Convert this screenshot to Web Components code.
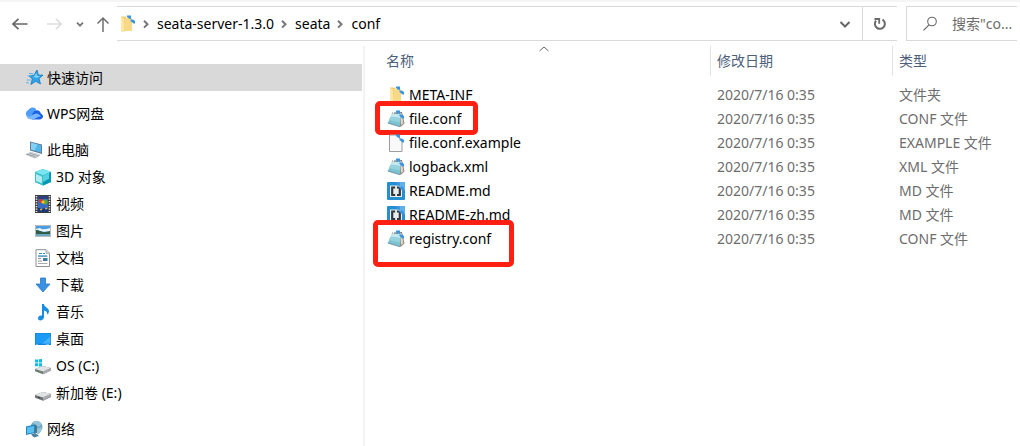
<!DOCTYPE html>
<html lang="zh-CN">
<head>
<meta charset="utf-8">
<title>conf</title>
<style>
  html, body { margin: 0; min-height: 100%; background: #fff; }
  body { font-family: "Noto Sans", "Noto Sans CJK SC", sans-serif; font-size: 14px; line-height: 24px; color: #000; }
</style>
</head>
<body>
<explorer-window></explorer-window>
<script>
const BADGE = '<path d="M9 .5h4v3.500h-1.500L9 2zM12.500 4.500H15l2 1.500v2.500h-1.500l-3-2.500z" fill="#3a94e0"/><path d="M12 3.500 13.500 5" stroke="#8fc4ee"/>';
const ICONS = {
  back: '<path d="M16.500 9H2M7.500 3.800 2 9l5.500 5.200" fill="none" stroke="#666" stroke-width="1.700"/>',
  forward: '<path d="M2 9h14M10.800 3.800 16.300 9l-5.500 5.200" fill="none" stroke="#ddd" stroke-width="1.700"/>',
  history: '<path d="m6 7.700 3 3 3-3" fill="none" stroke="#777" stroke-width="1.900"/>',
  up: '<path d="M9 17V3M3.500 8.500 9 3l5.500 5.500" fill="none" stroke="#707070" stroke-width="1.500"/>',
  chevron: '<path d="m7 5.800 3.500 3.400L7 12.600" fill="none" stroke="#777" stroke-width="2"/>',
  down: '<path d="m4.500 7 4.500 4.500L13.500 7" fill="none" stroke="#666" stroke-width="2"/>',
  refresh: '<path d="M11.500 4.600A5 5 0 1 1 5 5.700" fill="none" stroke="#6a6a6a" stroke-width="2"/><path d="M3.500 4h4.700v4.700" fill="none" stroke="#6a6a6a" stroke-width="1.800"/>',
  search: '<circle cx="11" cy="6.500" r="4.300" fill="none" stroke="#666" stroke-width="1.100"/><path d="M8 9.800 2.500 15.300" stroke="#666" stroke-width="1.200"/>',
  sort: '<path d="m4.500 11 4.500-4 4.500 4" fill="none" stroke="#666" stroke-width="1"/>',
  star: '<path d="m12 1 1.300 5 4.700.2-4 3.300 1.500 5.500-4.700-2.700-5 3.200 1.600-5.600L4 7l5-.8z" fill="#2fa4ea" stroke="#1476bd" stroke-width=".8"/><path d="m11.500 4 .8 3 3.200.3-3.500 1.700-3.500-1z" fill="#7ad2fb"/><path d="M4 4.500h4M2.500 7h4M1.800 11h4M1 13.800h3" stroke="#62b3e6" stroke-width="1"/>',
  cloud: '<path d="M2 11.500A4.200 4.200 0 0 1 3.500 4.800 4.800 4.800 0 0 1 11 4l-1 9H5a4 4 0 0 1-3-1.500z" fill="#4f9efb"/><path d="M7 14.500C7 11 7 8 9 6.500c3-2.500 6.500-.5 6.800 2 3.500 1.500 2.700 6-1.300 6z" fill="#1b62e8"/><path d="M1.500 11c3.500 2 6-2 9.500-2.500 2.500 0 4 1.500 5 3.500-2.500-2-5 2.500-9 2.500-3 0-5-1-5.500-3.500z" fill="#79b8ff"/>',
  pc: '<path d="m5 .5 12 3v9.500L5 9.500z" fill="#5f7f99"/><path d="m6 1.700 10 2.600v7.200L6 8.500z" fill="#4fb4ea"/><path d="m6 1.700 6.500 1.700-3 6.200L6 8.500z" fill="#86d0f5"/><path d="m.8 12.800 5.200-2 9 2.800-5 3.200z" fill="#d3d7db"/><path d="m2 13 8.500 2.700M4.500 12l8.500 2.700" stroke="#8a929b" stroke-width=".8"/><path d="M.8 13.200 10 17l5-3" fill="none" stroke="#9aa1a8" stroke-width=".8"/>',
  cube: '<path d="m1 4 8-3 8 3v10l-8 3.500L1 14z" fill="#23b0ca"/><path d="m1 4 8-3 8 3-8 3.500z" fill="#78e5ef"/><path d="m1 4 8 3.500v10L1 14z" fill="#40c0cc"/><path d="m2 6 6 2.700v6.500L2 13z" fill="#b0edf1"/><path d="M9 7.500 17 4v10l-8 3.500z" fill="#0798b6"/><path d="m9 7.500 6-2.700v6L9 14z" fill="#55d1e2"/>',
  video: '<path d="M1 0h16v18H1z" fill="#3c3c3c"/><path d="M4 1h10v16H4z" fill="#376bc4"/><path d="M2.500 1v16M15.500 1v16" stroke="#eee" stroke-width="1.600" stroke-dasharray="1.300 1.200"/><path d="M4 1h10v3H4z" fill="#2c407c"/><circle cx="7" cy="6" r="2" fill="#e33525"/><circle cx="11" cy="7" r="2.500" fill="#66a928"/><circle cx="9" cy="7" r="1.600" fill="#ffc12f"/><path d="M4 13h2l2 1.500 3-2 3 2V17H4z" fill="#173b77"/><path d="M6 14.500h2m3-1h2" stroke="#f1a431" stroke-width="1.600"/>',
  photo: '<path d="M1 3h16v12H1z" fill="#a9adb0"/><path d="M1.800 3.800h14.400v10.400H1.800z" fill="#fff"/><path d="M2 4h14v10H2z" fill="#b8dff9"/><path d="M2 4h14v3H2z" fill="#4c9de3"/><path d="m2 7 4-1 3 2 7-2v3H2z" fill="#edf5f5"/><path d="M2 8c4 0 5 2 9 2l5-1v3H2z" fill="#315e4a"/><path d="M2 12h14v2H2z" fill="#6aaac0"/>',
  document: '<path d="M2 .7h10l3.500 3.500V17.500H2z" fill="#fff" stroke="#8d9297"/><path d="M12 .7v3.500h3.500" fill="#ddd" stroke="#999" stroke-width=".8"/><path d="M4 7.200h9.500M4 9.500h3M4 12h4" stroke="#8e9398"/><path d="M5 4.500h3m1 0h2M4 7h9" stroke="#2c91cf" stroke-width="1.200"/><path d="M9 9h4.500v3H9z" fill="#3e7d9f"/><path d="M4 14.500h9.500" stroke="#aaa"/>',
  download: '<path d="M6.500 2h5v6H16l-7 8-7-8h4.500z" fill="#3a91e1" stroke="#2678c4" stroke-width=".8"/>',
  music: '<path d="M8 1h2c0 3 5 4 5 7 0 1.500-.8 3-1.800 3.800C13.500 9 12 8 10 7.500V14c0 4-6 4.500-6 1.500 0-2.500 2-3.500 4-3z" fill="#168fe2"/>',
  desktop: '<path d="M1 3h16v12H1z" fill="#1684d6"/><path d="M1.600 3.600h14.800v10H1.600z" fill="#1b9bf4"/><path d="m8 13.600 8.400-7v7z" fill="#42b2fd"/><path d="M2 14.400h2m8 0h3" stroke="#c0e5ff" stroke-width=".6"/>',
  system: '<path d="M1 2.500h3v3H1zm3.700-.3L8 2v3.500H4.700zM1 6.200h3v3H1zm3.700 0H8V9.500H4.700z" fill="#12bce9"/><path d="m1 12 8-3 8 2v2.500l-8 3.700-8-3z" fill="#737679"/><path d="m1 12 8-3 8 2-8 3.500z" fill="#e1e3e4"/><path d="m9 14.500 8-3.500v2.500l-8 3.700z" fill="#a9acaf"/><path d="m5 14.500 2 .8" stroke="#45a54c" stroke-width="1.200"/>',
  drive: '<path d="m1 11 8-3 8 2v3l-8 3.700-8-3z" fill="#6f7274"/><path d="m1 11 8-3 8 2-8 3.500z" fill="#e1e3e4"/><path d="m9 13.500 8-3.500v2.500l-8 4z" fill="#a9acaf"/><path d="m4 13.300 2 .7" stroke="#444"/>',
  network: '<circle cx="11.500" cy="7" r="6" fill="#6aa8c4"/><path d="M7.500 3c3-4 8-2 9 1l-3 3-3-2zM12 9l5-2-2 6-3 2z" fill="#97c5d8"/><path d="m1 6.500 9-2v8.500l-9 2z" fill="#2685c3"/><path d="m2 7.500 7-1.600v6.300l-7 1.600z" fill="#58c1f2"/><path d="m10 4.500 2 1V13l-2 .2z" fill="#557584"/><path d="m6 14.500 4-1.500 4 3-5 1.500z" fill="#4b829d"/>',
  folder: '<path d="M3 1.500h5.500v14L5 17l-2-1.200z" fill="#f3cf72"/><path d="M7 3h7v13H6z" fill="#f7d988"/><path d="m3 2 3 1.800V17l-3-1.500z" fill="#ffe8a7"/>' + BADGE,
  config: '<path d="m7 2.500 8-.5 2.500 11.500-4 3.500z" fill="#8d8178"/><path d="m13 3.500 1.700-.3 1.800 10-2.500 2.300z" fill="#d8d2cb"/><path d="M5 3.500 13.500 4 13 16.500.8 13z" fill="#7cc3d2"/><path d="m5 3.500 8.500.5-.5 4L3.500 7z" fill="#c2e7ee"/><path d="m3.500 7 9.500 1-.2 4.500-11-2.500z" fill="#97d2de"/><path d="M.8 13 13 16.700" stroke="#5d8b99" stroke-width=".9"/><path d="m5 3 8 .5" stroke="#7e8a8d" stroke-dasharray="1 1"/>' + BADGE,
  blank: '<path d="M2.500 1h7l5.500 5.500v11H2.500z" fill="#f9f9f9" stroke="#9d9d9d"/>' + BADGE,
  markdown: '<rect width="18" height="18" rx="1" fill="#258fd0"/><path d="M3 3.500h12v11.500H3z" fill="#e9edef"/><path d="M8.200 5.500H5.200v7.500h3M10 5.500h2.800V13H10" fill="none" stroke="#33383c" stroke-width="2.200"/><path d="M10.500 0H18v8l-3-.5-4-3.500z" fill="#5fb0e8"/>' + BADGE
};

class ShellIcon extends HTMLElement {
  connectedCallback() {
    this.attachShadow({ mode: 'open' }).innerHTML = `
      <style>:host { display: block; flex: none; width: 18px; height: 18px; } svg { display: block; width: 100%; height: 100%; }</style>
      <svg viewBox="0 0 18 18" aria-hidden="true">${ICONS[this.getAttribute('name')]}</svg>`;
  }
}
customElements.define('shell-icon', ShellIcon);

class IconButton extends HTMLElement {
  connectedCallback() {
    this.attachShadow({ mode: 'open' }).innerHTML = `
      <style>
        :host { display: block; flex: none; }
        button { display: grid; place-items: center; width: 100%; height: 100%; padding: 0; border: 0; background: none; }
      </style>
      <button type="button" aria-label="${this.getAttribute('label')}"><slot></slot></button>`;
  }
}
customElements.define('icon-button', IconButton);

class AddressBar extends HTMLElement {
  connectedCallback() {
    const crumbs = this.getAttribute('path').split('/');
    this.attachShadow({ mode: 'open' }).innerHTML = `
      <style>
        :host { display: flex; box-sizing: border-box; flex: 1; height: 35px; border: solid #d9d9d9; border-width: 1px 0; }
        nav { flex: 1; display: flex; align-items: center; padding-left: 1px; font-size: 14px; }
        a { color: #000; text-decoration: none; }
        .chevron { margin: 0 2px 0 1px; }
        .expand { width: 34px; }
        .reload { width: 34px; border-left: 1px solid #d9d9d9; }
      </style>
      <nav aria-label="地址"><shell-icon name="folder"></shell-icon>${
        crumbs.map(c => `<shell-icon class="chevron" name="chevron"></shell-icon><a href="#${c}">${c}</a>`).join('')
      }</nav>
      <icon-button class="expand" label="历史位置"><shell-icon name="down"></shell-icon></icon-button>
      <icon-button class="reload" label="刷新"><shell-icon name="refresh"></shell-icon></icon-button>`;
  }
}
customElements.define('address-bar', AddressBar);

class SearchBox extends HTMLElement {
  connectedCallback() {
    this.attachShadow({ mode: 'open' }).innerHTML = `
      <style>
        :host { display: block; box-sizing: border-box; flex: none; width: 111px; height: 35px; border: solid #d9d9d9; border-width: 1px 0 1px 1px; }
        label { display: flex; align-items: center; gap: 13px; height: 100%; padding-left: 14px; }
        input { flex: 1; min-width: 0; padding: 0; border: 0; outline: 0; background: none; font: inherit; font-size: 14px; color: #6d6d6d; }
        input::placeholder { color: #6d6d6d; opacity: 1; }
      </style>
      <label><shell-icon name="search"></shell-icon><input type="text" aria-label="搜索" placeholder='搜索"co...'></label>`;
  }
}
customElements.define('search-box', SearchBox);

class NavItem extends HTMLElement {
  connectedCallback() {
    this.attachShadow({ mode: 'open' }).innerHTML = `
      <style>
        :host { display: block; }
        a { display: flex; align-items: center; gap: 4px; height: 27px; padding-left: 25px; color: #000; text-decoration: none; }
        :host([child]) a { padding-left: 34px; }
        :host([selected]) a { background: #d9d9d9; }
      </style>
      <a href="#"><shell-icon name="${this.getAttribute('icon')}"></shell-icon><span><slot></slot></span></a>`;
  }
}
customElements.define('nav-item', NavItem);

class NavTree extends HTMLElement {
  connectedCallback() {
    this.attachShadow({ mode: 'open' }).innerHTML = `
      <style>
        :host { display: block; padding-top: 18px; }
        nav { display: flex; flex-direction: column; gap: 9px; }
      </style>
      <nav aria-label="导航窗格">
        <nav-item icon="star" selected>快速访问</nav-item>
        <nav-item icon="cloud">WPS网盘</nav-item>
        <div>
          <nav-item icon="pc">此电脑</nav-item>
          <nav-item child icon="cube">3D 对象</nav-item>
          <nav-item child icon="video">视频</nav-item>
          <nav-item child icon="photo">图片</nav-item>
          <nav-item child icon="document">文档</nav-item>
          <nav-item child icon="download">下载</nav-item>
          <nav-item child icon="music">音乐</nav-item>
          <nav-item child icon="desktop">桌面</nav-item>
          <nav-item child icon="system">OS (C:)</nav-item>
          <nav-item child icon="drive">新加卷 (E:)</nav-item>
        </div>
        <nav-item icon="network">网络</nav-item>
      </nav>`;
  }
}
customElements.define('nav-tree', NavTree);

const FILES = [
  ['folder', 'META-INF', '文件夹'],
  ['config', 'file.conf', 'CONF 文件', 'compact'],
  ['blank', 'file.conf.example', 'EXAMPLE 文件'],
  ['config', 'logback.xml', 'XML 文件'],
  ['markdown', 'README.md', 'MD 文件'],
  ['markdown', 'README-zh.md', 'MD 文件'],
  ['config', 'registry.conf', 'CONF 文件', 'roomy']
];

class FileList extends HTMLElement {
  connectedCallback() {
    this.attachShadow({ mode: 'open' }).innerHTML = `
      <style>
        :host { display: block; position: relative; }
        table { width: 100%; table-layout: fixed; border-collapse: separate; border-spacing: 0; }
        .name { width: 345px; } .date { width: 182px; }
        th, td { padding: 0 0 0 6px; text-align: left; font-weight: 400; white-space: nowrap; }
        th { height: 30px; border-left: 1px solid #e3e3e3; }
        th:first-child { padding-left: 21px; border-left: 0; }
        th button { padding: 0; border: 0; background: none; font: inherit; color: #4c607a; }
        tbody::before { content: ""; display: table-row; height: 7px; }
        td { height: 24px; padding-left: 7px; color: #6d6d6d; }
        td:first-child { padding-left: 22px; color: #000; }
        .file { position: relative; display: flex; align-items: center; gap: 4px; }
        .mark { position: absolute; box-sizing: border-box; border: 5px solid #ff2012; border-radius: 5px; pointer-events: none; }
        .compact { left: -12px; top: -6px; width: 103px; height: 34px; }
        .roomy { left: -14px; top: -7px; width: 141px; height: 47px; }
        .sort { position: absolute; left: 170px; top: -6px; }
      </style>
      <table>
        <colgroup><col class="name"><col class="date"><col></colgroup>
        <thead><tr><th scope="col"><button type="button">名称</button></th><th scope="col"><button type="button">修改日期</button></th><th scope="col"><button type="button">类型</button></th></tr></thead>
        <tbody>${FILES.map(([icon, name, type, mark]) => `
          <tr><td><div class="file"><shell-icon name="${icon}"></shell-icon><span>${name}</span>${mark ? `<span class="mark ${mark}"></span>` : ''}</div></td><td>2020/7/16 0:35</td><td>${type}</td></tr>`).join('')}
        </tbody>
      </table>
      <shell-icon class="sort" name="sort"></shell-icon>`;
  }
}
customElements.define('file-list', FileList);

class ExplorerWindow extends HTMLElement {
  connectedCallback() {
    this.attachShadow({ mode: 'open' }).innerHTML = `
      <style>
        :host { display: flex; flex-direction: column; min-height: 100vh; box-sizing: border-box; border-top: 2px solid #f5f5f5; }
        header { display: flex; align-items: center; padding: 4px 3px 5px 11px; }
        .arrow { width: 18px; height: 35px; }
        .back { margin-right: 16px; }
        .history { margin: 0 5px 0 8px; }
        address-bar { margin-left: 5px; }
        search-box { margin-left: 9px; }
        main { flex: 1; display: grid; grid-template-columns: 362px 1fr; }
        .content { border-left: 2px solid #f3f3f3; margin-left: 1px; }
      </style>
      <header>
        <icon-button class="arrow back" label="后退"><shell-icon name="back"></shell-icon></icon-button>
        <icon-button class="arrow" label="前进"><shell-icon name="forward"></shell-icon></icon-button>
        <icon-button class="arrow history" label="最近位置"><shell-icon name="history"></shell-icon></icon-button>
        <icon-button class="arrow" label="上移"><shell-icon name="up"></shell-icon></icon-button>
        <address-bar path="seata-server-1.3.0/seata/conf"></address-bar>
        <search-box></search-box>
      </header>
      <main>
        <nav-tree></nav-tree>
        <section class="content"><file-list></file-list></section>
      </main>`;
  }
}
customElements.define('explorer-window', ExplorerWindow);
</script>
</body>
</html>
